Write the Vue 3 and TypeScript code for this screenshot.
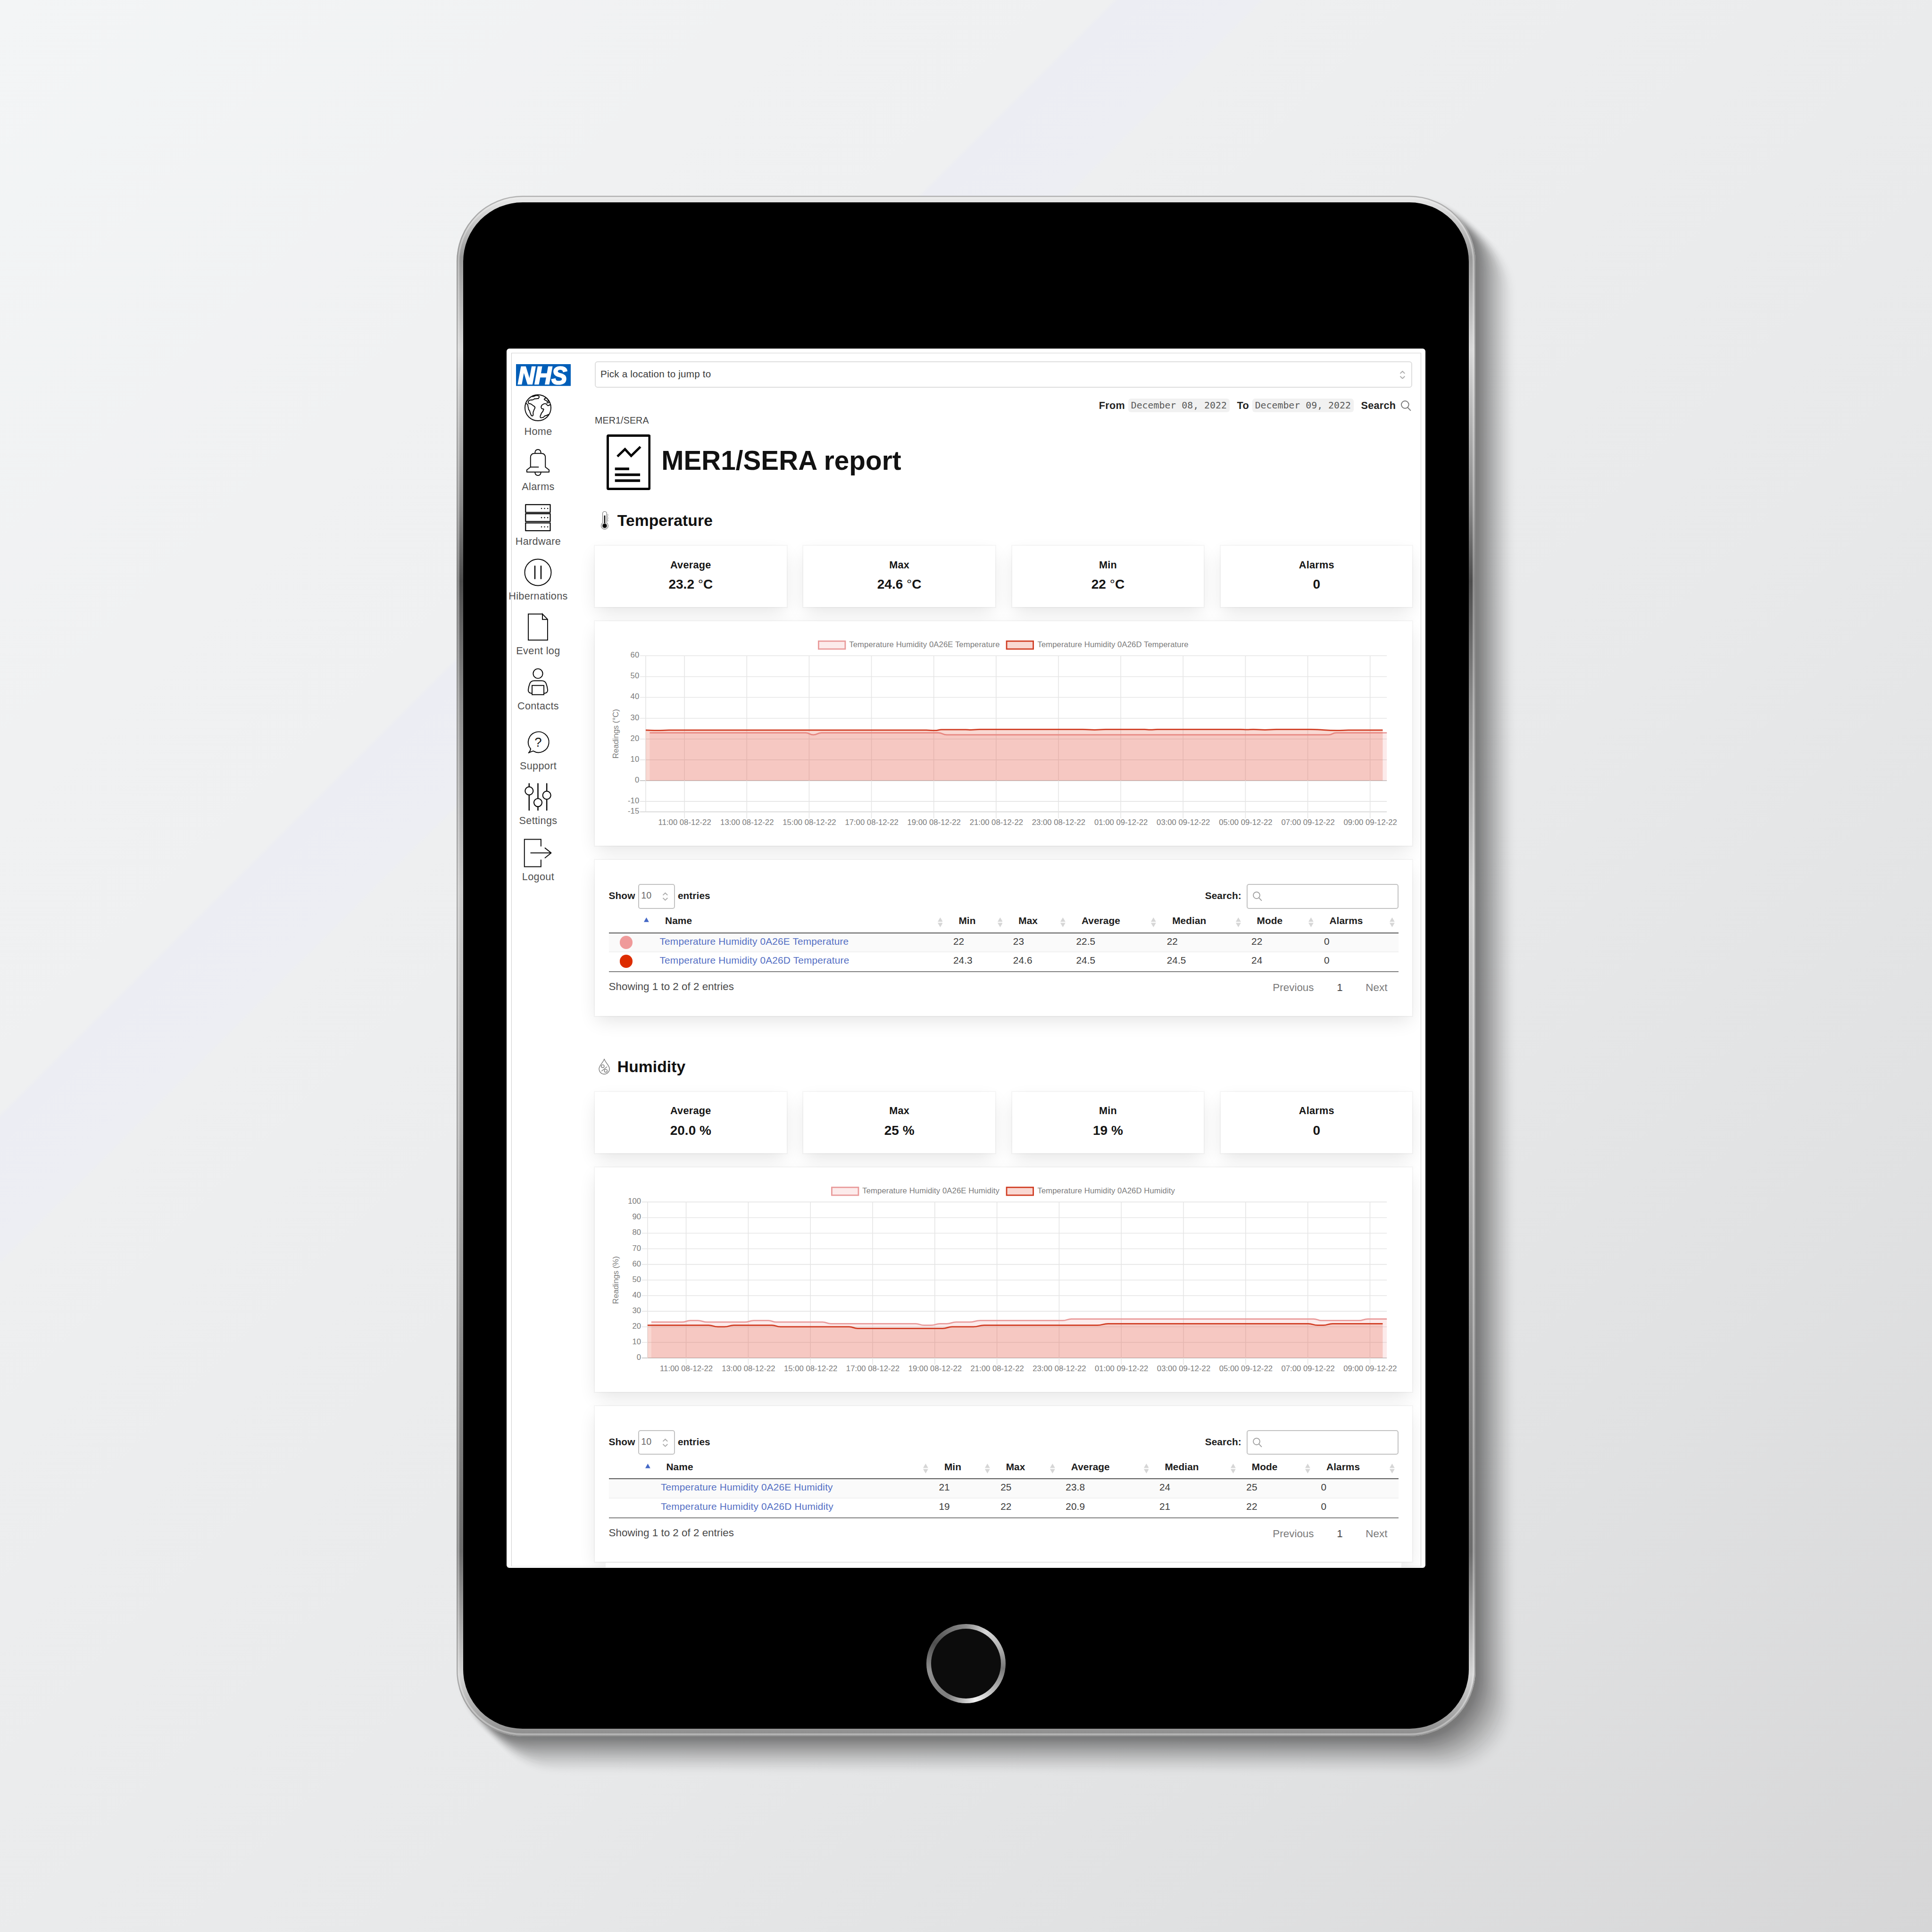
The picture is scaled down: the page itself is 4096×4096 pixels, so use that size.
<script setup lang="ts">
interface Column { label: string; width: number }
interface Row { color: string; name: string; values: string[] }
type Point = [number, number]
interface Series { label: string; stroke: string; fill: string; points: Point[] }
interface Chart {
  axis: string
  left: number
  legendX: number
  firstTick: number
  tickStep: number
  zeroY: number
  unit: number
  ticks: number[]
  series: Series[]
}
interface Section {
  title: string
  icon: 'thermometer' | 'drop'
  stats: { label: string; value: string; unit: string }[]
  chart: Chart
  columns: Column[]
  rows: Row[]
}

const nav = ['Home', 'Alarms', 'Hardware', 'Hibernations', 'Event log', 'Contacts', 'Support', 'Settings', 'Logout']

const times = [
  '11:00 08-12-22', '13:00 08-12-22', '15:00 08-12-22', '17:00 08-12-22', '19:00 08-12-22', '21:00 08-12-22',
  '23:00 08-12-22', '01:00 09-12-22', '03:00 09-12-22', '05:00 09-12-22', '07:00 09-12-22', '09:00 09-12-22',
]

const pale = { stroke: '#e99a9a', fill: 'rgba(239,154,154,0.2)' }
const vivid = { stroke: '#d03c22', fill: 'rgba(226,60,30,0.2)' }

const columns = (widths: number[]): Column[] =>
  ['', 'Name', 'Min', 'Max', 'Average', 'Median', 'Mode', 'Alarms'].map((label, i) => ({ label, width: widths[i] }))

const sections: Section[] = [
  {
    title: 'Temperature',
    icon: 'thermometer',
    stats: [
      { label: 'Average', value: '23.2', unit: '°C' },
      { label: 'Max', value: '24.6', unit: '°C' },
      { label: 'Min', value: '22', unit: '°C' },
      { label: 'Alarms', value: '0', unit: '' },
    ],
    chart: {
      axis: 'Readings (°C)',
      left: 109.8,
      legendX: 481,
      firstTick: 193.4,
      tickStep: 134.4,
      zeroY: 343.8,
      unit: 4.487,
      ticks: [60, 50, 40, 30, 20, 10, 0, -10, -15],
      series: [
        {
          label: 'Temperature Humidity 0A26E Temperature', ...pale,
          points: [[118.4, 23], [454.8, 23], [471, 22], [489, 23], [740.6, 23], [759, 22], [1582.3, 22], [1598.7, 23], [1707.9, 23]],
        },
        {
          label: 'Temperature Humidity 0A26D Temperature', ...vivid,
          points: [[109.8, 24.3], [134.5, 24.1], [160, 24.3], [715, 24.3], [733, 24.1], [748, 24.5], [800, 24.5], [811, 24.4], [830, 24.6],
            [1052, 24.6], [1077.7, 24.4], [1102, 24.6], [1185, 24.6], [1198, 24.45], [1213, 24.6], [1392, 24.6], [1406, 24.5],
            [1420, 24.6], [1445, 24.4], [1470, 24.6], [1544, 24.6], [1600, 24.1], [1625, 24.3], [1699, 24.3]],
        },
      ],
    },
    columns: columns([95, 633, 129, 136, 195.5, 182.5, 156.5, 175.5]),
    rows: [
      { color: '#ef9a9a', name: 'Temperature Humidity 0A26E Temperature', values: ['22', '23', '22.5', '22', '22', '0'] },
      { color: '#dd2c00', name: 'Temperature Humidity 0A26D Temperature', values: ['24.3', '24.6', '24.5', '24.5', '24', '0'] },
    ],
  },
  {
    title: 'Humidity',
    icon: 'drop',
    stats: [
      { label: 'Average', value: '20.0', unit: '%' },
      { label: 'Max', value: '25', unit: '%' },
      { label: 'Min', value: '19', unit: '%' },
      { label: 'Alarms', value: '0', unit: '' },
    ],
    chart: {
      axis: 'Readings (%)',
      left: 113.8,
      legendX: 509.5,
      firstTick: 196.9,
      tickStep: 134.06,
      zeroY: 411,
      unit: 3.364,
      ticks: [100, 90, 80, 70, 60, 50, 40, 30, 20, 10, 0],
      series: [
        {
          label: 'Temperature Humidity 0A26E Humidity', ...pale,
          points: [[121.9, 23], [187.9, 23], [206, 24], [222.3, 24], [242.4, 23], [322.8, 23], [342.9, 24], [374.4, 24], [391.7, 23],
            [491, 23], [509.3, 22], [691.8, 22], [710, 21], [724.6, 21], [744.7, 22], [759, 22], [779, 23], [807.8, 23], [830.8, 24],
            [1009, 24], [1027.8, 25], [1550, 25], [1567.6, 24], [1646.8, 24], [1667.4, 25], [1707.9, 25]],
        },
        {
          label: 'Temperature Humidity 0A26D Humidity', ...vivid,
          points: [[113.8, 21], [245.3, 21], [265.4, 20], [279.7, 20], [299.8, 21], [381.9, 21], [400.3, 20], [548.3, 20], [566.7, 19],
            [750.4, 19], [770.5, 20], [816.4, 20], [839.4, 21], [1083.6, 21], [1107, 22], [1538.3, 22], [1558.8, 21], [1570.5, 21],
            [1591, 22], [1699, 22]],
        },
      ],
    },
    columns: columns([97.5, 599.5, 133, 140.5, 202, 187.5, 161, 182]),
    rows: [
      { color: '', name: 'Temperature Humidity 0A26E Humidity', values: ['21', '25', '23.8', '24', '25', '0'] },
      { color: '', name: 'Temperature Humidity 0A26D Humidity', values: ['19', '22', '20.9', '21', '22', '0'] },
    ],
  },
]

const plotRight = 1707.9
const plotTop = 74.6
const plotBottom = 411.2

const yOf = (c: Chart, v: number) => c.zeroY - v * c.unit

// Smooth curve with level tangents at each reading.
function line(c: Chart, pts: Point[]): string {
  return pts
    .map(([x, v], i) => {
      const y = yOf(c, v).toFixed(1)
      if (i === 0) return `M${x} ${y}`
      const [px, pv] = pts[i - 1]
      const mid = ((px + x) / 2).toFixed(1)
      return `C${mid} ${yOf(c, pv).toFixed(1)} ${mid} ${y} ${x} ${y}`
    })
    .join(' ')
}

function area(c: Chart, pts: Point[]): string {
  return `${line(c, pts)} L${pts[pts.length - 1][0]} ${c.zeroY} L${pts[0][0]} ${c.zeroY} Z`
}

const grid = (s: Section) => s.columns.map((c) => `${c.width}px`).join(' ')
</script>

<template>
  <div class="page">
    <div class="tablet">
      <div class="glass">
        <div class="screen">
          <div class="frame"></div>
          <aside class="sidebar">
            <svg class="logo" viewBox="0 0 118 47">
              <rect width="118" height="47" fill="#005eb8" />
              <text x="4" y="42.3" textLength="106" lengthAdjust="spacingAndGlyphs">NHS</text>
            </svg>
            <nav>
              <a v-for="item in nav" :key="item" class="nav-item" :class="'nav-' + item.toLowerCase()">
                <svg class="nav-icon" viewBox="0 0 60 60">
                  <template v-if="item === 'Home'">
                    <circle cx="30" cy="30" r="28" />
                    <path d="M17 5.5C20 7 24 3.5 27 3.4C30 4 33 4 32.6 6.5C33 8.5 31 8 30.7 10.3C28 9.5 26 11 23.7 10.5C21 11 20 13 18 13C15 13.5 12.5 12.5 10.7 14.5C8.5 16.5 8.5 19 10 20.5C12 22 13 21 15 22C17 22.5 17.5 24.5 20 25.5C22 26.5 24 28 23.6 30C23.5 32 21.5 33.5 21 36C20.5 38 19.5 38 19.6 41C19.5 43 20.5 46.5 18.5 47.5C16 48 15 46 14.5 44C14 42 12.5 40.5 12.5 38C12.5 35 9.5 35.5 9.5 32C9.5 29 8 28 8.3 24.5C8 22 6 21.5 3.5 20.5" />
                    <path d="M57.3 24C55 22 54 26 51 25.3C49 25 50 22 47.5 21.6C45 21 43 21 41.5 22.3C40 23.5 38 23.5 37.5 26C36.5 28 37 30.5 38.5 32C40 33 42 31.5 42.5 33.5C41.5 35.5 41 37 40.2 38.5C39 40.5 37.5 40.5 37 43C36.5 46 34 47 35 50.5C36 53 38.5 50.5 41.3 50.8C43 50.5 43 48 45 47.5C48 47 50 46 53 44.5" />
                    <path d="M43.5 11.7C44.5 9.5 46 9 47.5 8.8C50 9.5 53 14 52 16C50.5 18 49 15.8 48 14.5C46.5 13.5 44 13.5 43.5 11.7ZM49.5 19C51.5 20 53.5 19 54.5 17.5" />
                  </template>
                  <template v-else-if="item === 'Alarms'">
                    <path d="M23.7 10V8.3A6.3 6.3 0 0 1 36.3 8.3V10M23.7 51V51.7A6.3 6.3 0 0 0 36.3 51.7V51" />
                    <path d="M14 40V19.5Q14 10.5 23 10.5H37Q46 10.5 46 19.5V40L54 46V50.7H6V46L14 40H31" />
                  </template>
                  <template v-else-if="item === 'Hardware'">
                    <g v-for="y in [1.8, 21.5, 41.4]" :key="y">
                      <rect x="3.3" :y="y" width="53.2" height="16.8" stroke-width="2.3" />
                      <circle v-for="x in [37.7, 44.3, 51]" :key="x" :cx="x" :cy="y + 8.4" r="1.3" class="solid" />
                    </g>
                  </template>
                  <template v-else-if="item === 'Hibernations'">
                    <circle cx="30" cy="30" r="28.5" />
                    <path d="M23.4 16.6V43.4M36.6 16.6V43.4" stroke-width="2.6" />
                  </template>
                  <path v-else-if="item === 'Event log'" d="M39.7 1.8H9.2V58H50.8V13.4L39.7 1.8V13.4H50.8" stroke-linejoin="miter" />
                  <template v-else-if="item === 'Contacts'">
                    <circle cx="30" cy="12.2" r="10.3" />
                    <path d="M17 55Q9 54 9 48Q10 40 12.3 34Q14.5 27.7 22 27.7H38Q45.5 27.7 47.7 34Q50 40 51 48Q51 54 43 55" />
                    <path d="M17.3 37.8H42.8V57.8H17.3Z" stroke-linejoin="miter" />
                  </template>
                  <template v-else-if="item === 'Support'">
                    <path d="M14.3 44.3A22.3 22.3 0 1 1 19.8 49Q15 50.5 9.8 53Q13.5 49.5 14.3 44.3Z" />
                    <text x="30.3" y="39.8" text-anchor="middle">?</text>
                  </template>
                  <template v-else-if="item === 'Settings'">
                    <path d="M11 1.5V58.5M30 1.5V58.5M49 1.5V58.5" stroke-width="2.6" />
                    <circle cx="11" cy="17" r="8.7" class="knob" />
                    <circle cx="30" cy="42.3" r="8.7" class="knob" />
                    <circle cx="49" cy="26.4" r="8.7" class="knob" />
                  </template>
                  <template v-else>
                    <path d="M36.5 15V0.6H0.8V59.4H36.5V45" stroke-linejoin="miter" />
                    <path d="M14.5 29.8H58.5M45.3 19.2L58.5 29.8L45.3 40.4" />
                  </template>
                </svg>
                <span>{{ item }}</span>
              </a>
            </nav>
          </aside>

          <main class="main">
            <div class="location">
              <span>Pick a location to jump to</span>
              <svg class="chevrons" viewBox="0 0 13 18"><path d="M1.5 6L6.5 1.2L11.5 6M1.5 12L6.5 16.8L11.5 12" /></svg>
            </div>

            <div class="range">
              <b>From</b><code>December 08, 2022</code>
              <b class="to">To</b><code>December 09, 2022</code>
              <b class="go">Search</b>
              <svg class="search-icon" viewBox="0 0 22 23"><circle cx="9" cy="9" r="8" /><path d="M14.5 15L21.2 22" /></svg>
            </div>

            <div class="crumb">MER1/SERA</div>
            <div class="headline">
              <svg class="report-icon" viewBox="0 0 95 120">
                <rect x="2.5" y="2.5" width="90" height="115" rx="1.5" stroke-width="5" />
                <path d="M23.3 47.5L39.7 31.8L53 46.2L73 26.8" />
                <path d="M18 74.3H48.7M18 86.9H72.3M18 99.6H72.3" stroke-width="5.6" />
              </svg>
              <h1>MER1/SERA report</h1>
            </div>

            <section v-for="s in sections" :key="s.title" class="section">
              <h2>
                <span class="h-icon">
                  <svg v-if="s.icon === 'thermometer'" width="17" height="40" viewBox="0 0 17 40">
                    <path d="M3.6 25V5A4.5 4.5 0 0 1 12.6 5V25A7.6 7.6 0 1 1 3.6 25Z" fill="none" stroke="#777" stroke-width="1.2" />
                    <path d="M8.1 9V30" stroke="#111" stroke-width="2.8" />
                    <circle cx="8.1" cy="31.2" r="4.8" fill="#000" />
                    <path d="M13 8H16.5M13 11.5H15.5M13 14.5H16.5M13 17.5H15.5M13 20.5H16.5" stroke="#777" stroke-width="1" />
                  </svg>
                  <svg v-else width="25" height="35" viewBox="0 0 25 35">
                    <path d="M12.3 1C11 8 1 15 1 22.5A11.3 11.3 0 0 0 23.6 22.5C23.6 15 13.5 8 12.3 1Z" />
                    <circle cx="9" cy="16.7" r="3.1" />
                    <circle cx="15.6" cy="26.6" r="3.1" />
                    <path d="M6.3 27.5L18.4 17.8" />
                  </svg>
                </span>
                {{ s.title }}
              </h2>

              <div class="stats">
                <div v-for="st in s.stats" :key="st.label" class="card stat">
                  <div class="stat-label">{{ st.label }}</div>
                  <div class="stat-value">
                    {{ st.value }}<template v-if="st.unit === '°C'">&nbsp;<i>°</i>C</template><template v-else-if="st.unit">&nbsp;{{ st.unit }}</template>
                  </div>
                </div>
              </div>

              <div class="card chart">
                <svg viewBox="0 0 1763 484">
                  <g class="legend">
                    <rect :x="s.chart.legendX + 1.5" y="43" width="57.5" height="17" :fill="s.chart.series[0].fill" :stroke="s.chart.series[0].stroke" />
                    <text :x="s.chart.legendX + 67.5" y="55.8">{{ s.chart.series[0].label }}</text>
                    <rect x="888" y="43" width="57.5" height="17" :fill="s.chart.series[1].fill" :stroke="s.chart.series[1].stroke" />
                    <text x="954.5" y="55.8">{{ s.chart.series[1].label }}</text>
                  </g>
                  <text class="axis" :transform="`translate(50.5 ${(plotTop + plotBottom) / 2}) rotate(-90)`" text-anchor="middle">{{ s.chart.axis }}</text>
                  <g v-for="t in s.chart.ticks" :key="t">
                    <line :x1="s.chart.left - 12.5" :x2="plotRight" :y1="yOf(s.chart, t)" :y2="yOf(s.chart, t)" :class="{ zero: t === 0, base: t === -15 }" />
                    <text :x="s.chart.left - 14" :y="yOf(s.chart, t) + 4" text-anchor="end">{{ t }}</text>
                  </g>
                  <line :x1="s.chart.left" :x2="s.chart.left" :y1="plotTop" :y2="plotBottom" />
                  <g v-for="(t, i) in times" :key="t">
                    <line :x1="s.chart.firstTick + i * s.chart.tickStep" :x2="s.chart.firstTick + i * s.chart.tickStep" :y1="plotTop" :y2="plotBottom + 14" />
                    <text :x="s.chart.firstTick + i * s.chart.tickStep + 0.5" y="439.7" text-anchor="middle">{{ t }}</text>
                  </g>
                  <g v-for="r in s.chart.series" :key="r.label">
                    <path :d="area(s.chart, r.points)" :fill="r.fill" />
                    <path :d="line(s.chart, r.points)" fill="none" :stroke="r.stroke" stroke-width="2.8" />
                  </g>
                </svg>
              </div>

              <div class="card readings">
                <div class="toolbar">
                  <b>Show</b>
                  <span class="length">10<svg class="chevrons" viewBox="0 0 13 18"><path d="M1.5 6L6.5 1.2L11.5 6M1.5 12L6.5 16.8L11.5 12" /></svg></span>
                  <b>entries</b>
                  <b class="filter">Search:</b>
                  <span class="input"><svg class="search-icon" viewBox="0 0 22 23"><circle cx="9" cy="9" r="7.8" /><path d="M14.5 15L21.2 22" /></svg></span>
                </div>
                <div class="row head" :style="{ gridTemplateColumns: grid(s) }">
                  <div v-for="(c, i) in s.columns" :key="i" class="th">
                    <span>{{ c.label }}</span>
                    <svg v-if="i === 0" width="11" height="21" viewBox="0 0 11 21"><path d="M0 9.8L5.5 0L11 9.8Z" fill="#4468c6" /></svg>
                    <svg v-else width="11" height="21" viewBox="0 0 11 21"><path d="M0 9.4L5.5 0L11 9.4ZM0 11.8L5.5 21L11 11.8Z" fill="#d6d6d6" /></svg>
                  </div>
                </div>
                <div v-for="r in s.rows" :key="r.name" class="row body" :style="{ gridTemplateColumns: grid(s) }">
                  <div class="mark"><span v-if="r.color" class="dot" :style="{ background: r.color }"></span></div>
                  <div class="td link">{{ r.name }}</div>
                  <div v-for="(v, i) in r.values" :key="i" class="td">{{ v }}</div>
                </div>
                <div class="foot">
                  <span>Showing 1 to 2 of 2 entries</span>
                  <div class="pager"><span>Previous</span><span class="current">1</span><span>Next</span></div>
                </div>
              </div>
            </section>
            <div class="next-section"></div>
          </main>
        </div>
        <div class="home-button"><div class="home-face"></div></div>
      </div>
    </div>
  </div>
</template>

<style>
html,
body {
  margin: 0;
  overflow: hidden;
}
</style>

<style scoped>
* {
  box-sizing: border-box;
}
.page {
  zoom: 0.983197;
  width: 4166px;
  height: 4166px;
  padding: 422px 0 0 985px;
  font-family: 'Liberation Sans', Arial, sans-serif;
  background: linear-gradient(135deg, #f3f5f6 0%, #f0f1f2 20%, #eff0f1 28.8%, #ecedf3 28.95%, #edeef3 32.6%, #eeeff0 32.75%, #e8e9ea 60%, #e0e1e2 80%, #d6d6d7 100%);
}
.tablet {
  width: 2196px;
  height: 3322px;
  padding: 14px 14px 16px 14px;
  border-radius: 142px;
  background:
    linear-gradient(180deg, #ececec 0%, #9a9a9a 4%, #d8d8d8 10%, #8a8a8a 20%, #4c4c4c 25%, #8d8d8d 33%, #c9c9c9 45%, #b4b4b4 60%, #8a8a8a 75%, #6c6c6c 88%, #d5d5d5 96%, #8c8c8c 100%);
  box-shadow:
    inset 0 0 0 2.5px rgba(120, 120, 120, 0.5),
    inset 0 0 0 6px rgba(240, 240, 240, 0.4),
    9px 9px 10px rgba(60, 60, 60, 0.18),
    18px 16px 12px rgba(60, 60, 60, 0.15),
    27px 25px 12px rgba(60, 60, 60, 0.13),
    36px 33px 14px rgba(60, 60, 60, 0.11),
    45px 41px 14px rgba(60, 60, 60, 0.1),
    54px 50px 14px rgba(60, 60, 60, 0.08),
    62px 58px 16px rgba(60, 60, 60, 0.06),
    70px 66px 16px rgba(60, 60, 60, 0.05),
    78px 73px 18px rgba(60, 60, 60, 0.04);
}
.glass {
  height: 100%;
  padding: 315.5px 93px 0;
  border-radius: 128px;
  background: #000;
  display: flex;
  flex-direction: column;
  align-items: center;
}
.screen {
  position: relative;
  flex: none;
  width: 1981px;
  height: 2629.5px;
  padding-top: 28px;
  border-radius: 6px;
  background: #fff;
  overflow: hidden;
  display: flex;
  align-items: flex-start;
}
.frame {
  position: absolute;
  inset: 9.5px 9px 3px 10px;
  border: 1.2px solid #cfcfcf;
  border-bottom-color: #e6e6e6;
}
.sidebar {
  position: relative;
  width: 136px;
  margin-right: 54.2px;
  padding-top: 6px;
}
.logo {
  display: block;
  width: 118px;
  height: 47px;
  margin-left: 20px;
  overflow: visible;
}
.logo text {
  font: italic bold 53px 'Liberation Sans', Arial, sans-serif;
  fill: #fff;
  stroke: #fff;
  stroke-width: 2.6;
}
nav {
  padding-top: 16.8px;
}
.nav-item {
  display: flex;
  flex-direction: column;
  align-items: center;
  height: 118.3px;
  color: #505050;
  font-size: 22px;
  line-height: 26px;
  letter-spacing: 0.35px;
  white-space: nowrap;
}
.nav-support {
  margin-top: 11px;
}
.nav-logout {
  margin-top: 3px;
}
.nav-item span {
  margin-top: 8.4px;
}
.nav-icon {
  width: 60px;
  height: 60px;
  flex: none;
  overflow: visible;
  fill: none;
  stroke: #0c0c0c;
  stroke-width: 2;
  stroke-linejoin: round;
  stroke-linecap: round;
}
.nav-icon text {
  font: 28px 'Liberation Sans', Arial, sans-serif;
  letter-spacing: 0;
  fill: #111;
  stroke: none;
}
.nav-icon .solid {
  fill: #111;
  stroke: none;
}
.nav-icon .knob {
  fill: #fff;
  stroke-width: 2.2;
}
.main {
  position: relative;
  width: 1763px;
}
.location {
  height: 57px;
  padding: 0 13px;
  border: 2.1px solid #dedede;
  border-radius: 6px;
  background: #fff;
  display: flex;
  align-items: center;
  justify-content: space-between;
  font-size: 21px;
  letter-spacing: 0.2px;
  color: #3a3a3a;
}
.location span {
  margin: -3px 0 0 -3px;
}
.chevrons {
  width: 13px;
  height: 18px;
  fill: none;
  stroke: #ababab;
  stroke-width: 2;
}
.range {
  height: 30px;
  margin-top: 23px;
  display: flex;
  align-items: center;
  justify-content: flex-end;
  font-size: 22px;
  letter-spacing: 0.25px;
  color: #222;
}
.range b {
  margin-top: 1px;
}
.range code {
  height: 30px;
  margin-left: 7px;
  padding: 0 6px;
  border-radius: 6px;
  background: #f1f1f1;
  color: #5a5a5a;
  font: 20.2px/30.5px 'DejaVu Sans Mono', monospace;
  letter-spacing: 0;
  white-space: nowrap;
}
.range .to,
.range .go {
  margin-left: 16px;
}
.range .search-icon {
  width: 22px;
  height: 23px;
  margin: 2px 3px 0 11px;
}
.search-icon {
  fill: none;
  stroke: #777;
  stroke-width: 1.9;
}
.crumb {
  margin-top: 6px;
  font-size: 20px;
  line-height: 24px;
  letter-spacing: 0.1px;
  color: #444;
}
.headline {
  display: flex;
  height: 120px;
  margin-top: 17px;
  padding-left: 25px;
}
.report-icon {
  width: 95px;
  height: 120px;
  fill: none;
  stroke: #000;
  stroke-width: 5;
}
h1 {
  margin: 27.2px 0 0 23.5px;
  font-size: 57.7px;
  line-height: 60px;
  color: #111;
  white-space: nowrap;
}
h2 {
  display: flex;
  height: 40px;
  margin: 46px 0 34.5px;
  font-size: 34.2px;
  line-height: 40px;
  letter-spacing: 0.1px;
  color: #111;
}
.section + .section h2 {
  margin-top: 89.5px;
}
.h-icon {
  width: 48.5px;
  display: flex;
  padding-left: 8px;
  align-items: center;
}
.h-icon svg {
  fill: none;
  stroke: #777;
  stroke-width: 1.4;
}
.h-icon svg[width='17'] {
  margin-left: 5px;
}
.card {
  background: #fff;
  box-shadow:
    0 15px 38px -4px rgba(10, 10, 10, 0.11),
    0 0 0 2.1px rgba(10, 10, 10, 0.03);
}
.stats {
  display: grid;
  grid-template-columns: repeat(4, 1fr);
  gap: 36.5px;
}
.stat {
  height: 132px;
  padding-top: 28px;
  text-align: center;
  font-weight: bold;
  color: #151515;
}
.stat-label {
  font-size: 22px;
  line-height: 26px;
  letter-spacing: 0.3px;
}
.stat-value {
  margin-top: 12px;
  font-size: 28.5px;
  line-height: 34px;
}
.stat-value i {
  font-style: normal;
  font-weight: normal;
}
.chart {
  position: relative;
  height: 484px;
  margin-top: 30.6px;
}
.chart svg {
  display: block;
  width: 1763px;
  height: 484px;
}
.chart text {
  font-size: 17px;
  fill: #7c7c7c;
}
.chart .legend text {
  letter-spacing: 0.08px;
}
.chart line {
  stroke: #e5e5e5;
  stroke-width: 1.6;
}
.chart line.zero {
  stroke: #b8b8b8;
}
.chart line.base {
  stroke: #cfcfcf;
}
.legend rect {
  stroke-width: 2.8;
}
.readings {
  position: relative;
  height: 336px;
  margin-top: 31px;
  padding: 52px 30px 0;
  color: #3c3c3c;
  font-size: 21.2px;
  letter-spacing: 0.08px;
}
.toolbar {
  display: flex;
  align-items: center;
  height: 53px;
  color: #1c1c1c;
}
.toolbar b {
  margin-top: -2px;
}
.length {
  display: flex;
  align-items: center;
  justify-content: space-between;
  width: 79px;
  height: 53px;
  margin: 0 6px 0 7px;
  padding: 0 12px 3px 4px;
  border: 2.1px solid #c2c2c2;
  border-radius: 5px;
  font-size: 20px;
  color: #6a6a6a;
}
.length .chevrons {
  margin-top: 4px;
}
.filter {
  margin-left: auto;
}
.input {
  display: flex;
  align-items: center;
  width: 328px;
  height: 53px;
  margin-left: 11px;
  padding-left: 12px;
  border: 2.1px solid #c2c2c2;
  border-radius: 5px;
}
.input .search-icon {
  width: 20px;
  height: 21px;
  stroke: #9a9a9a;
}
.row {
  display: grid;
}
.head {
  height: 53px;
  border-bottom: 2.1px solid #5a5a5a;
  font-weight: bold;
  line-height: 26px;
  color: #1c1c1c;
}
.th {
  display: flex;
  justify-content: space-between;
  padding: 13px 8px 0 26.5px;
}
.th svg {
  margin-top: 6px;
}
.body {
  height: 41px;
  border-bottom: 2.1px solid #f1f1f1;
  line-height: 26px;
}
.head + .body {
  background: #fafafa;
}
.body + .body {
  height: 43px;
  border-bottom: 2.1px solid #808080;
}
.td {
  padding: 4.2px 0 0 14.8px;
  white-space: nowrap;
}
.link {
  color: #5570c4;
  letter-spacing: 0.17px;
}
.mark {
  padding: 5.5px 0 0 23.3px;
}
.dot {
  display: block;
  width: 28px;
  height: 28px;
  border-radius: 50%;
}
.foot {
  display: flex;
  justify-content: space-between;
  margin-top: 17.5px;
  font-size: 22.8px;
  line-height: 28px;
  letter-spacing: 0;
  color: #4a4a4a;
}
.pager {
  display: flex;
  gap: 49.5px;
  margin: 1.5px 24px 0 0;
  color: #7a7a7a;
}
.pager .current {
  color: #444;
}
.next-section {
  position: relative;
  height: 12px;
  margin: 1.5px 24px 0 23px;
  background: #fff;
}
.home-button {
  width: 171px;
  height: 171px;
  margin-top: 121px;
  padding: 10px;
  border-radius: 50%;
  background: conic-gradient(#8c8c8c 0%, #d8d8d8 9%, #b0b0b0 18%, #777 27%, #bdbdbd 38%, #f2f2f2 46%, #7c7c7c 58%, #8f8f8f 72%, #4e4e4e 84%, #8c8c8c 100%);
}
.home-face {
  height: 100%;
  border-radius: 50%;
  background: #0c0c0c;
}
</style>
